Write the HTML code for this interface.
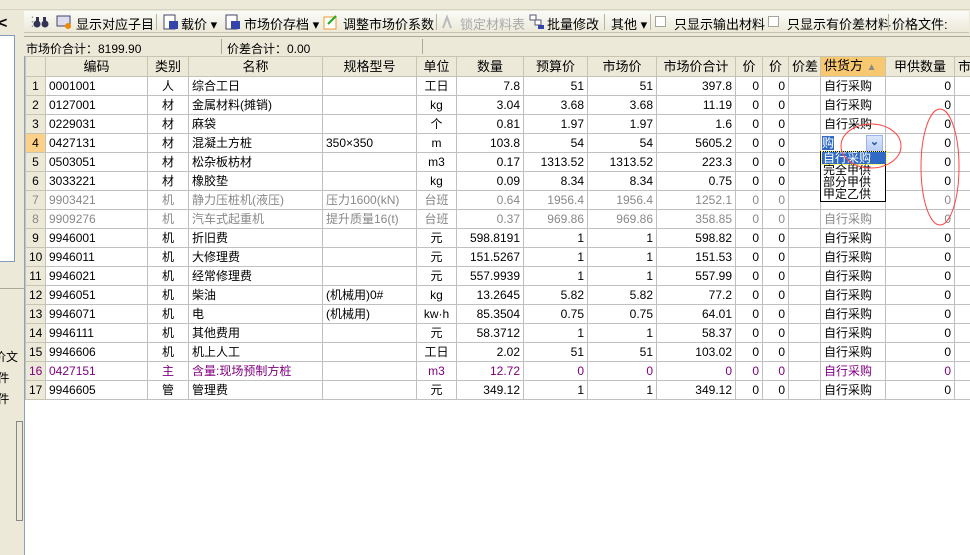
<!DOCTYPE html>
<html><head><meta charset="utf-8"><style>
*{margin:0;padding:0;box-sizing:border-box}
body{width:970px;height:555px;overflow:hidden;background:#fff;font-family:"Liberation Sans","Noto Sans CJK SC","WenQuanYi Zen Hei",sans-serif;font-size:12px;color:#000;position:relative}
.abs{position:absolute}
#tb0{left:0;top:0;width:970px;height:10px;background:#ece9d8;border-bottom:1px solid #d8d4c4}
#tb1{left:0;top:10px;width:970px;height:26px;background:#ece9d8}
#tb1 .bar{position:absolute;left:24px;top:1px;width:945px;height:22px;background:linear-gradient(#fbfbf8,#ece9d8);border-bottom:1px solid #c8c4b4}
.ti{position:absolute;top:3px;font-size:13px;white-space:nowrap}
.sep{position:absolute;top:3px;width:1px;height:16px;background:#b8b4a4}
.ic{position:absolute;top:3px;width:16px;height:16px}
.cb{position:absolute;top:5px;width:11px;height:11px;border:1px solid #a8a498;background:#fff}
#st{left:24px;top:36px;width:946px;height:20px;background:#ece9d8;border-top:1px solid #aca899}
#st span{position:absolute;top:3px;font-size:12px}
#left{left:0;top:10px;width:24px;height:545px;background:#ece9d8}
#grid{left:24px;top:56px;width:946px;height:499px;background:#fff;border-left:1px solid #8ca0c0}
table{border-collapse:collapse;table-layout:fixed;position:absolute;left:0;top:0;width:949px}
td,th{border:1px solid #c0c0c0;height:19px;padding:0 3px;white-space:nowrap;overflow:hidden;font-weight:normal;font-size:12px;line-height:17px}
th{background:#ece9d8;text-align:center;font-size:13px;border-color:#c8c4b4}
td.rh{background:#ece9d8;text-align:center;border-color:#c8c4b4}
.r{text-align:right}.c{text-align:center}
tr.g td{color:#888}
tr.p td{color:#800080}
</style></head><body>
<div id="tb0" class="abs"></div>
<div id="tb1" class="abs"><div class="bar">
<span class="ti" style="left:2px;color:#999">⋮</span>
<svg class="ic" style="left:9px" viewBox="0 0 16 16"><circle cx="4" cy="10" r="3.5" fill="#335"/><circle cx="12" cy="10" r="3.5" fill="#335"/><rect x="3" y="3" width="3" height="5" fill="#335"/><rect x="10" y="3" width="3" height="5" fill="#335"/></svg>
<svg class="ic" style="left:32px" viewBox="0 0 16 16"><rect x="1" y="2" width="13" height="10" fill="#dde" stroke="#446"/><circle cx="12" cy="12" r="3" fill="#e80"/></svg>
<span class="ti" style="left:52px">显示对应子目</span>
<div class="sep" style="left:132px"></div>
<svg class="ic" style="left:139px" viewBox="0 0 16 16"><rect x="1" y="1" width="11" height="14" fill="#fff" stroke="#446"/><rect x="6" y="7" width="9" height="8" fill="#34a"/></svg>
<span class="ti" style="left:157px">载价 ▾</span>
<svg class="ic" style="left:201px" viewBox="0 0 16 16"><rect x="1" y="1" width="11" height="14" fill="#fff" stroke="#446"/><rect x="6" y="7" width="9" height="8" fill="#34a"/></svg>
<span class="ti" style="left:220px">市场价存档 ▾</span>
<svg class="ic" style="left:299px" viewBox="0 0 16 16"><rect x="1" y="3" width="12" height="12" fill="#fff" stroke="#e93"/><path d="M5 10 L13 2" stroke="#2a2" stroke-width="2"/></svg>
<span class="ti" style="left:319px">调整市场价系数</span>
<div class="sep" style="left:412px"></div>
<svg class="ic" style="left:417px" viewBox="0 0 16 16"><path d="M2 14 L6 3 L10 14" fill="none" stroke="#bbb" stroke-width="2"/></svg>
<span class="ti" style="left:436px;color:#aaa">锁定材料表</span>
<svg class="ic" style="left:505px" viewBox="0 0 16 16"><rect x="1" y="1" width="6" height="5" fill="#fff" stroke="#557"/><rect x="6" y="6" width="6" height="5" fill="#fff" stroke="#557"/><rect x="9" y="11" width="6" height="4" fill="#34a"/></svg>
<span class="ti" style="left:523px">批量修改</span>
<div class="sep" style="left:580px"></div>
<span class="ti" style="left:587px">其他 ▾</span>
<div class="sep" style="left:626px"></div>
<div class="cb" style="left:631px"></div>
<span class="ti" style="left:650px">只显示输出材料</span>
<div class="cb" style="left:744px"></div>
<span class="ti" style="left:763px">只显示有价差材料</span>
<div class="sep" style="left:864px"></div>
<span class="ti" style="left:868px">价格文件:</span>
</div></div>
<div id="left" class="abs">
<div class="abs" style="left:-2px;top:5px;font-size:16px;font-weight:bold">&lt;</div>
<div class="abs" style="left:0;top:25px;width:15px;height:227px;background:#fff;border:1px solid #7f9db9;border-left:none"></div>
<div class="abs" style="left:0;top:278px;width:24px;height:1px;background:#aca899"></div>
<div class="abs" style="left:-6px;top:337px;font-size:12px;line-height:21px">价文<br>&nbsp;件<br>&nbsp;件</div>
<div class="abs" style="left:16px;top:411px;width:7px;height:100px;border:1px solid #888;background:#ece9d8"></div>
</div>
<div id="st" class="abs"><span style="left:2px">市场价合计：8199.90</span><div class="abs" style="left:197px;top:2px;width:1px;height:15px;background:#aca899"></div><span style="left:203px">价差合计：0.00</span><div class="abs" style="left:398px;top:2px;width:1px;height:15px;background:#aca899"></div></div>
<div id="grid" class="abs">
<table>
<colgroup><col style="width:20px"><col style="width:102px"><col style="width:41px"><col style="width:134px"><col style="width:94px"><col style="width:40px"><col style="width:67px"><col style="width:64px"><col style="width:69px"><col style="width:79px"><col style="width:27px"><col style="width:26px"><col style="width:32px"><col style="width:65px"><col style="width:69px"><col style="width:20px"></colgroup>
<tr><th></th><th>编码</th><th>类别</th><th>名称</th><th>规格型号</th><th>单位</th><th>数量</th><th>预算价</th><th>市场价</th><th>市场价合计</th><th>价</th><th>价</th><th>价差</th><th style="background:#f8c870;text-align:left">供货方 <span style="color:#888;font-size:10px">▲</span></th><th>甲供数量</th><th>市</th></tr>
<tr><td class="rh">1</td><td>0001001</td><td class="c">人</td><td>综合工日</td><td></td><td class="c">工日</td><td class="r">7.8</td><td class="r">51</td><td class="r">51</td><td class="r">397.8</td><td class="r">0</td><td class="r">0</td><td></td><td>自行采购</td><td class="r">0</td><td></td></tr>
<tr><td class="rh">2</td><td>0127001</td><td class="c">材</td><td>金属材料(摊销)</td><td></td><td class="c">kg</td><td class="r">3.04</td><td class="r">3.68</td><td class="r">3.68</td><td class="r">11.19</td><td class="r">0</td><td class="r">0</td><td></td><td>自行采购</td><td class="r">0</td><td></td></tr>
<tr><td class="rh">3</td><td>0229031</td><td class="c">材</td><td>麻袋</td><td></td><td class="c">个</td><td class="r">0.81</td><td class="r">1.97</td><td class="r">1.97</td><td class="r">1.6</td><td class="r">0</td><td class="r">0</td><td></td><td>自行采购</td><td class="r">0</td><td></td></tr>
<tr><td class="rh" style="background:#fcd088">4</td><td>0427131</td><td class="c">材</td><td>混凝土方桩</td><td>350×350</td><td class="c">m</td><td class="r">103.8</td><td class="r">54</td><td class="r">54</td><td class="r">5605.2</td><td class="r">0</td><td class="r">0</td><td></td><td style="padding:0 0 0 1px"><span style="background:#316ac5;color:#fff;line-height:14px;display:inline-block">购</span></td><td class="r">0</td><td></td></tr>
<tr><td class="rh">5</td><td>0503051</td><td class="c">材</td><td>松杂板枋材</td><td></td><td class="c">m3</td><td class="r">0.17</td><td class="r">1313.52</td><td class="r">1313.52</td><td class="r">223.3</td><td class="r">0</td><td class="r">0</td><td></td><td></td><td class="r">0</td><td></td></tr>
<tr><td class="rh">6</td><td>3033221</td><td class="c">材</td><td>橡胶垫</td><td></td><td class="c">kg</td><td class="r">0.09</td><td class="r">8.34</td><td class="r">8.34</td><td class="r">0.75</td><td class="r">0</td><td class="r">0</td><td></td><td></td><td class="r">0</td><td></td></tr>
<tr class="g"><td class="rh">7</td><td>9903421</td><td class="c">机</td><td>静力压桩机(液压)</td><td>压力1600(kN)</td><td class="c">台班</td><td class="r">0.64</td><td class="r">1956.4</td><td class="r">1956.4</td><td class="r">1252.1</td><td class="r">0</td><td class="r">0</td><td></td><td></td><td class="r">0</td><td></td></tr>
<tr class="g"><td class="rh">8</td><td>9909276</td><td class="c">机</td><td>汽车式起重机</td><td>提升质量16(t)</td><td class="c">台班</td><td class="r">0.37</td><td class="r">969.86</td><td class="r">969.86</td><td class="r">358.85</td><td class="r">0</td><td class="r">0</td><td></td><td>自行采购</td><td class="r">0</td><td></td></tr>
<tr><td class="rh">9</td><td>9946001</td><td class="c">机</td><td>折旧费</td><td></td><td class="c">元</td><td class="r">598.8191</td><td class="r">1</td><td class="r">1</td><td class="r">598.82</td><td class="r">0</td><td class="r">0</td><td></td><td>自行采购</td><td class="r">0</td><td></td></tr>
<tr><td class="rh">10</td><td>9946011</td><td class="c">机</td><td>大修理费</td><td></td><td class="c">元</td><td class="r">151.5267</td><td class="r">1</td><td class="r">1</td><td class="r">151.53</td><td class="r">0</td><td class="r">0</td><td></td><td>自行采购</td><td class="r">0</td><td></td></tr>
<tr><td class="rh">11</td><td>9946021</td><td class="c">机</td><td>经常修理费</td><td></td><td class="c">元</td><td class="r">557.9939</td><td class="r">1</td><td class="r">1</td><td class="r">557.99</td><td class="r">0</td><td class="r">0</td><td></td><td>自行采购</td><td class="r">0</td><td></td></tr>
<tr><td class="rh">12</td><td>9946051</td><td class="c">机</td><td>柴油</td><td>(机械用)0#</td><td class="c">kg</td><td class="r">13.2645</td><td class="r">5.82</td><td class="r">5.82</td><td class="r">77.2</td><td class="r">0</td><td class="r">0</td><td></td><td>自行采购</td><td class="r">0</td><td></td></tr>
<tr><td class="rh">13</td><td>9946071</td><td class="c">机</td><td>电</td><td>(机械用)</td><td class="c">kw·h</td><td class="r">85.3504</td><td class="r">0.75</td><td class="r">0.75</td><td class="r">64.01</td><td class="r">0</td><td class="r">0</td><td></td><td>自行采购</td><td class="r">0</td><td></td></tr>
<tr><td class="rh">14</td><td>9946111</td><td class="c">机</td><td>其他费用</td><td></td><td class="c">元</td><td class="r">58.3712</td><td class="r">1</td><td class="r">1</td><td class="r">58.37</td><td class="r">0</td><td class="r">0</td><td></td><td>自行采购</td><td class="r">0</td><td></td></tr>
<tr><td class="rh">15</td><td>9946606</td><td class="c">机</td><td>机上人工</td><td></td><td class="c">工日</td><td class="r">2.02</td><td class="r">51</td><td class="r">51</td><td class="r">103.02</td><td class="r">0</td><td class="r">0</td><td></td><td>自行采购</td><td class="r">0</td><td></td></tr>
<tr class="p"><td class="rh">16</td><td>0427151</td><td class="c">主</td><td>含量:现场预制方桩</td><td></td><td class="c">m3</td><td class="r">12.72</td><td class="r">0</td><td class="r">0</td><td class="r">0</td><td class="r">0</td><td class="r">0</td><td></td><td>自行采购</td><td class="r">0</td><td></td></tr>
<tr><td class="rh">17</td><td>9946605</td><td class="c">管</td><td>管理费</td><td></td><td class="c">元</td><td class="r">349.12</td><td class="r">1</td><td class="r">1</td><td class="r">349.12</td><td class="r">0</td><td class="r">0</td><td></td><td>自行采购</td><td class="r">0</td><td></td></tr>
</table>
</div>
<div class="abs" style="left:866px;top:135px;width:17px;height:17px;background:linear-gradient(#dbe6fd,#b8cdf8);border:1px solid #9ab4ec;color:#2050a0;font-size:11px;font-weight:bold;text-align:center;line-height:13px">⌄</div>
<div class="abs" style="left:820px;top:151px;width:66px;height:51px;background:#fff;border:1px solid #000;font-size:12px;line-height:12px;padding:0 0 0 2px">
<div style="background:#316ac5;color:#fff;margin:0 -1px 0 -1px;padding-left:1px;outline:1px dotted #ff0;height:12px">自行采购</div><div>完全甲供</div><div>部分甲供</div><div>甲定乙供</div></div>
<svg class="abs" style="left:0;top:0" width="970" height="555"><ellipse cx="871" cy="146" rx="30" ry="22" fill="none" stroke="#f44" stroke-width="1"/><ellipse cx="940" cy="167" rx="19" ry="58" fill="none" stroke="#f44" stroke-width="1"/></svg>
</body></html>
